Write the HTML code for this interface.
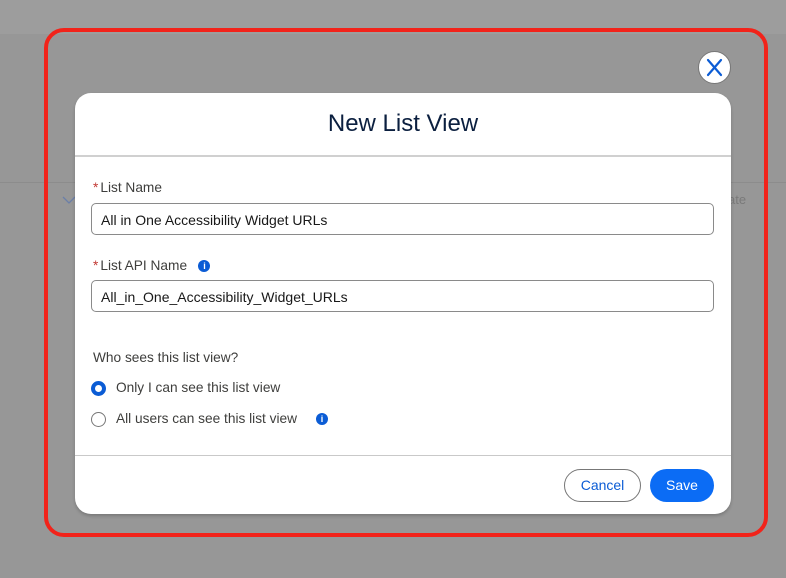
<!DOCTYPE html>
<html><head><style>
*{margin:0;padding:0;box-sizing:border-box}
body{width:786px;height:578px;background:#979797;position:relative;overflow:hidden;font-family:"Liberation Sans",sans-serif}
.top{position:absolute;left:0;top:0;width:786px;height:34px;background:#9d9d9d}
.rowline{position:absolute;left:0;top:182px;width:786px;height:1px;background:#8c8c8c}
.frame{position:absolute;left:44px;top:28px;width:724px;height:509px;border:4px solid #f2231a;border-radius:20px}
.close{position:absolute;left:698px;top:51px;width:33px;height:33px;border-radius:50%;background:#fff;border:1px solid #777}
.modal{position:absolute;left:75px;top:93px;width:656px;height:421px;background:#fff;border-radius:16px;box-shadow:0 2px 3px rgba(0,0,0,.2)}
h1{position:absolute;left:0;width:656px;top:17px;text-align:center;font-weight:normal;font-size:24px;color:#0b1f3f}
.hl{position:absolute;left:0;width:656px;height:2px;background:#d0d0d0}
.lbl{position:absolute;font-size:13.7px;color:#3e3e3c}
.req{color:#c23934;margin-right:2px}
.inp{position:absolute;left:16px;width:623px;height:32px;border:1px solid #8a8a8a;border-radius:5px;font-size:14px;color:#181818;padding:8px 0 0 9px}
.info{display:inline-block;width:12px;height:12px;border-radius:50%;background:#0b5cd5;color:#fff;font-size:9px;font-weight:bold;text-align:center;line-height:12px;vertical-align:1px}
.radio{position:absolute;left:16px;width:15px;height:15px;border-radius:50%;border:1px solid #777}
.btn{position:absolute;top:376px;height:33px;border-radius:17px;font-size:14px;text-align:center;line-height:33px}
</style></head><body>
<div class="top"></div>
<div class="rowline"></div>
<svg style="position:absolute;left:62px;top:195px" width="14" height="10"><path d="M1 2L7 8L13 2" stroke="#6b7fa8" stroke-width="1.3" fill="none"/></svg>
<div style="position:absolute;left:728px;top:192px;color:#7a7a7a;font-size:13px">ate</div>
<div class="frame"></div>
<div class="close"><svg width="33" height="33" viewBox="0 0 33 33" style="position:absolute;left:-1px;top:-1px"><path d="M10 9L23 24M23 9L10 24" stroke="#0b5cd5" stroke-width="2.2" stroke-linecap="round"/></svg></div>
<div class="modal">
<h1>New List View</h1>
<div class="hl" style="top:62px"></div>
<div class="lbl" style="left:18px;top:87px"><span class="req">*</span>List Name</div>
<div class="inp" style="top:110px">All in One Accessibility Widget URLs</div>
<div class="lbl" style="left:18px;top:165px"><span class="req">*</span>List API Name &nbsp;&nbsp;<span class="info">i</span></div>
<div class="inp" style="top:187px">All_in_One_Accessibility_Widget_URLs</div>
<div class="lbl" style="left:18px;top:257px">Who sees this list view?</div>
<div class="radio" style="top:288px;border:4px solid #0b5cd5"></div>
<div class="lbl" style="left:41px;top:287px">Only I can see this list view</div>
<div class="radio" style="top:319px"></div>
<div class="lbl" style="left:41px;top:318px">All users can see this list view &nbsp;&nbsp;&nbsp;&nbsp;<span class="info">i</span></div>
<div class="hl" style="top:362px;height:1px;background:#c9c9c9"></div>
<div class="btn" style="left:489px;width:77px;border:1px solid #777;line-height:31px;color:#0b5cd5">Cancel</div>
<div class="btn" style="left:575px;width:64px;background:#0b6cf5;color:#fff">Save</div>
</div>
</body></html>
